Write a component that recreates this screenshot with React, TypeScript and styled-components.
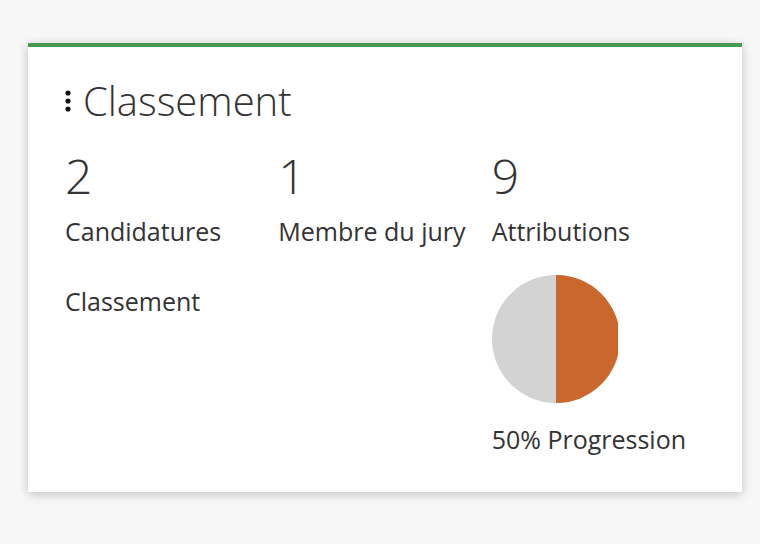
import styled, { createGlobalStyle } from 'styled-components';

const GlobalStyle = createGlobalStyle`
  html, body {
    margin: 0;
    padding: 0;
    background: #f7f7f7;
    font-family: "Open Sans", "Liberation Sans", sans-serif;
    color: #333;
  }
`;

const Page = styled.div`
  padding: 43px 18px 52px 28px;
`;

const Card = styled.section`
  background: #fff;
  border-top: 4px solid #449a50;
  box-shadow: 0 2px 10px rgba(0, 0, 0, 0.22);
  padding: 28px 37px 36px 37px;
  height: 449px;
  box-sizing: border-box;
`;

const Header = styled.h1`
  display: flex;
  align-items: center;
  gap: 12px;
  margin: 0;
  font-size: 40px;
  font-weight: 300;
  line-height: 52px;
  color: #333;
`;

const Grid = styled.div`
  display: grid;
  grid-template-columns: repeat(3, 1fr);
  margin-top: 19px;
`;

const Stat = styled.div`
  display: flex;
  flex-direction: column;
`;

const Number = styled.div`
  font-size: 48px;
  font-weight: 300;
  line-height: 60px;
`;

const Label = styled.div<{ $top?: number }>`
  font-size: 25px;
  line-height: 34px;
  margin-top: ${(p) => p.$top ?? 0}px;
`;

const Pie = styled.svg`
  display: block;
  margin-top: 27px;
`;

function Ellipsis() {
  return (
    <svg width="6" height="24" viewBox="0 0 6 24">
      <circle cx="3" cy="4" r="2.6" fill="#111" />
      <circle cx="3" cy="12" r="2.6" fill="#111" />
      <circle cx="3" cy="20" r="2.6" fill="#111" />
    </svg>
  );
}

function Progress({ pct }: { pct: number }) {
  const r = 64;
  const a = (pct / 100) * Math.PI * 2;
  const x = r + r * Math.sin(a);
  const y = r - r * Math.cos(a);
  const large = pct > 50 ? 1 : 0;
  return (
    <Pie width="126" height="128" viewBox="0 0 126 128">
      <circle cx={r} cy={r} r={r} fill="#d3d3d3" />
      <path d={`M${r} ${r} L${r} 0 A${r} ${r} 0 ${large} 1 ${x} ${y} Z`} fill="#c9672d" />
    </Pie>
  );
}

export default function App() {
  return (
    <>
      <GlobalStyle />
      <Page>
        <Card>
          <Header>
            <Ellipsis />
            Classement
          </Header>
          <Grid>
            <Stat>
              <Number>2</Number>
              <Label $top={8}>Candidatures</Label>
              <Label $top={36}>Classement</Label>
            </Stat>
            <Stat>
              <Number>1</Number>
              <Label $top={8}>Membre du jury</Label>
            </Stat>
            <Stat>
              <Number>9</Number>
              <Label $top={8}>Attributions</Label>
              <Progress pct={50} />
              <Label $top={19}>50% Progression</Label>
            </Stat>
          </Grid>
        </Card>
      </Page>
    </>
  );
}
